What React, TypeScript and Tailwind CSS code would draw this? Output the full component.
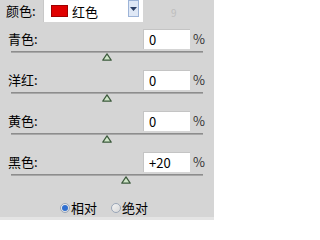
import React from 'react';

const FONT = { fontFamily: '"Noto Sans CJK SC", "Noto Sans", sans-serif' };

interface Row {
  label: string;
  value: string;
  pos: number; // triangle centre from slider start
}

const rows: Row[] = [
  { label: '青色:', value: '0', pos: 96 },
  { label: '洋红:', value: '0', pos: 96 },
  { label: '黄色:', value: '0', pos: 96 },
  { label: '黑色:', value: '+20', pos: 115 },
];

const Thumb: React.FC = () => (
  <svg width="10" height="8" viewBox="0 0 10 8">
    <path d="M5 0.8 L9.2 7.2 L0.8 7.2 Z" fill="#cfe6c8" stroke="#3d5a3d" strokeWidth="1.2" strokeLinejoin="round" />
  </svg>
);

const SliderRow: React.FC<{ row: Row }> = ({ row }) => (
  <div className="flex flex-col h-[41px] shrink-0">
    <div className="flex items-center h-[20px] mt-[3px] shrink-0">
      <span className="pl-[8px] w-[143px] text-[13px] text-black">{row.label}</span>
      <div className="w-[47px] h-[20px] bg-white border-t border-l border-[#c4c4c4] flex items-center pl-[5px] text-[13px] text-black">
        {row.value}
      </div>
      <span className="pl-[3px] text-[13px] text-[#333]">%</span>
    </div>
    <div className="ml-[11px] mt-[2px] w-[192px] h-[2px] shrink-0 bg-[#8d8d8d] border-b border-[#a8a8a8]" />
    <div className="ml-[11px] w-[192px] h-[8px] shrink-0 flex">
      <div style={{ width: row.pos - 5 }} />
      <Thumb />
    </div>
  </div>
);

const Radio: React.FC<{ checked?: boolean; label: string }> = ({ checked, label }) => (
  <div className="flex items-center gap-[1px]">
    <div className="w-[10px] h-[10px] rounded-full border border-[#9aa6b8] bg-gradient-to-br from-[#f4f4f4] to-[#d8d8d8] flex items-center justify-center">
      {checked && <div className="w-[6px] h-[6px] rounded-full bg-[#2f6fd0]" />}
    </div>
    <span className="text-[13px] text-black">{label}</span>
  </div>
);

export default function App() {
  return (
    <div className="w-[214px] h-[220px] bg-[#d5d5d5] overflow-hidden flex flex-col" style={FONT}>
      {/* colour selector */}
      <div className="flex h-[26px] shrink-0">
        <span className="pl-[6px] w-[43px] pt-[1px] text-[13px] text-black leading-[20px]">颜色:</span>
        <div className="w-[100px] h-[22px] bg-white border-l border-[#c8c8c8] flex items-center">
          <div className="ml-[7px] w-[17px] h-[12px] bg-[#e00000] border border-[#a00000]" />
          <span className="ml-[4px] text-[13px] text-black leading-none">红色</span>
          <div className="ml-auto mr-[4px] w-[11px] h-[17px] self-start bg-[#dfe8f6] border border-[#9db4d8] flex items-center justify-center">
            <svg width="7" height="4" viewBox="0 0 7 4">
              <path d="M0 0 H7 L3.5 4 Z" fill="#2b3f66" />
            </svg>
          </div>
        </div>
        <span className="ml-[28px] mt-[8px] text-[10px] text-[#bdbdbd] leading-none">9</span>
      </div>

      {rows.map((r) => (
        <SliderRow key={r.label} row={r} />
      ))}

      <div className="flex items-center gap-[14px] mt-[8px] pl-[60px] shrink-0 h-[19px]">
        <Radio checked label="相对" />
        <Radio label="绝对" />
      </div>
      <div className="mt-auto h-[4px] bg-[#e4e4e4] shrink-0" />
    </div>
  );
}
